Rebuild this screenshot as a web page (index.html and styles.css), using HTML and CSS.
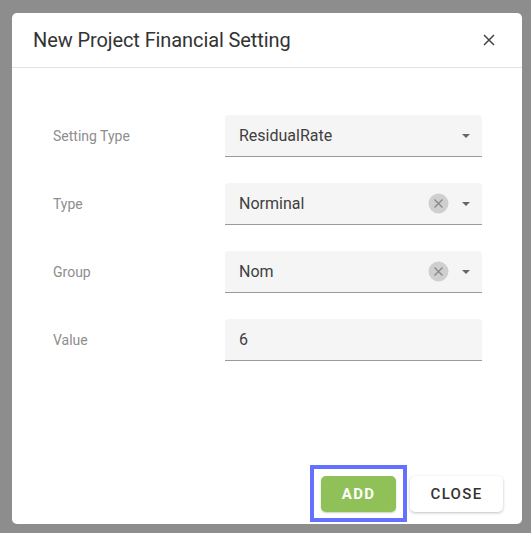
FILE: index.html
```html
<!DOCTYPE html>
<html>
<head>
<meta charset="utf-8">
<link rel="stylesheet" href="styles.css">
</head>
<body>
<div class="dialog">
  <div class="header">
    <div class="title">New Project Financial Setting</div>
    <button class="x-btn" aria-label="close">
      <svg width="12" height="12" viewBox="0 0 12 12"><path d="M1 1L11 11M11 1L1 11" stroke="#444" stroke-width="1.5" fill="none"/></svg>
    </button>
  </div>
  <div class="form">
    <div class="row">
      <div class="label">Setting Type</div>
      <div class="field">
        <span class="val">ResidualRate</span>
        <span class="icons"><span class="caret"></span></span>
      </div>
    </div>
    <div class="row">
      <div class="label">Type</div>
      <div class="field">
        <span class="val">Norminal</span>
        <span class="icons">
          <svg class="clear" width="21" height="21" viewBox="0 0 21 21"><circle cx="10.5" cy="10.5" r="10" fill="#cfcfcf"/><path d="M6.5 6.5L14.5 14.5M14.5 6.5L6.5 14.5" stroke="#8a8a8a" stroke-width="1.4" fill="none"/></svg>
          <span class="caret"></span>
        </span>
      </div>
    </div>
    <div class="row">
      <div class="label">Group</div>
      <div class="field">
        <span class="val">Nom</span>
        <span class="icons">
          <svg class="clear" width="21" height="21" viewBox="0 0 21 21"><circle cx="10.5" cy="10.5" r="10" fill="#cfcfcf"/><path d="M6.5 6.5L14.5 14.5M14.5 6.5L6.5 14.5" stroke="#8a8a8a" stroke-width="1.4" fill="none"/></svg>
          <span class="caret"></span>
        </span>
      </div>
    </div>
    <div class="row">
      <div class="label">Value</div>
      <div class="field">
        <span class="val">6</span>
      </div>
    </div>
  </div>
  <div class="footer">
    <button class="btn add">ADD</button>
    <button class="btn close">CLOSE</button>
  </div>
</div>
</body>
</html>
```
FILE: styles.css
```css
html, body {
  margin: 0;
  padding: 0;
}
body {
  width: 531px;
  height: 533px;
  background: #8d8d8d;
  padding: 13px 9px 9px 12px;
  box-sizing: border-box;
  font-family: Roboto, "Liberation Sans", sans-serif;
}
.dialog {
  width: 510px;
  height: 511px;
  background: #fff;
  border-radius: 5px;
  display: flex;
  flex-direction: column;
  box-sizing: border-box;
}
.header {
  height: 55px;
  border-bottom: 1px solid #e3e3e3;
  display: flex;
  align-items: center;
  justify-content: space-between;
  padding: 0 27px 0 21px;
  box-sizing: border-box;
}
.title {
  font-size: 20px;
  color: #333;
  letter-spacing: -0.1px;
}
.x-btn {
  border: none;
  background: none;
  padding: 0;
  width: 12px;
  height: 12px;
  display: flex;
}
.form {
  display: flex;
  flex-direction: column;
  gap: 26px;
  padding: 47px 40px 0 41px;
}
.row {
  display: flex;
  align-items: center;
  height: 42px;
}
.label {
  width: 172px;
  font-size: 14px;
  color: #8e8e8e;
}
.field {
  flex: 1;
  height: 42px;
  background: #f5f5f5;
  border-radius: 4px 4px 0 0;
  border-bottom: 1px solid #9a9a9a;
  box-sizing: border-box;
  display: flex;
  align-items: center;
  justify-content: space-between;
  padding: 0 12px 0 14px;
}
.val {
  font-size: 16px;
  color: #404040;
}
.icons {
  display: flex;
  align-items: center;
  gap: 13px;
}
.clear {
  display: block;
}
.caret {
  width: 0;
  height: 0;
  border-left: 4px solid transparent;
  border-right: 4px solid transparent;
  border-top: 4px solid #666;
  margin-top: 1px;
}
.footer {
  margin-top: auto;
  display: flex;
  justify-content: flex-end;
  gap: 14px;
  padding: 0 19px 12px 0;
}
.btn {
  height: 36px;
  border: none;
  border-radius: 5px;
  font-family: Roboto, "Liberation Sans", sans-serif;
  font-size: 15px;
  letter-spacing: 1.3px;
  font-weight: 500;
  padding: 0;
}
.add {
  position: relative;
  width: 75px;
  background: #8fc158;
  color: #fff;
  font-weight: 700;
  box-shadow: 0 1px 2px rgba(0,0,0,0.2);
}
.add::after {
  content: "";
  position: absolute;
  left: -11px;
  right: -11px;
  top: -11px;
  bottom: -10px;
  border: 4px solid #6470ff;
}
.close {
  width: 93px;
  background: #fff;
  color: #333;
  box-shadow: 0 1px 3px rgba(0,0,0,0.25);
}
```
